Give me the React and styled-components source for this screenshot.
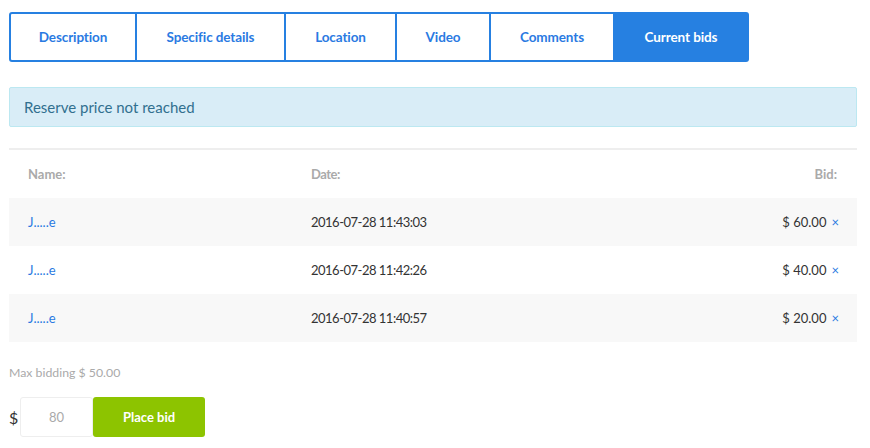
import styled, { createGlobalStyle } from "styled-components";

const GlobalStyle = createGlobalStyle`
  body {
    margin: 0;
    background: #fff;
    font-family: Lato, "Noto Sans", sans-serif;
  }
`;

const tabs = [
  { label: "Description", width: 128 },
  { label: "Specific details", width: 149 },
  { label: "Location", width: 111 },
  { label: "Video", width: 94 },
  { label: "Comments", width: 124 },
  { label: "Current bids", width: 134, active: true },
];

const bids = [
  { name: "J.....e", date: "2016-07-28 11:43:03", amount: "$ 60.00" },
  { name: "J.....e", date: "2016-07-28 11:42:26", amount: "$ 40.00" },
  { name: "J.....e", date: "2016-07-28 11:40:57", amount: "$ 20.00" },
];

export default function App() {
  return (
    <Page>
      <GlobalStyle />
      <TabBar>
        {tabs.map((t) => (
          <Tab key={t.label} $width={t.width} $active={t.active}>
            {t.label}
          </Tab>
        ))}
      </TabBar>

      <Alert>Reserve price not reached</Alert>

      <Table>
        <HeadRow>
          <NameCell>Name:</NameCell>
          <DateCell>Date:</DateCell>
          <BidCell>Bid:</BidCell>
        </HeadRow>
        {bids.map((b, i) => (
          <Row key={b.date} $striped={i % 2 === 0}>
            <NameCell>
              <NameLink href="#">{b.name}</NameLink>
            </NameCell>
            <DateCell>{b.date}</DateCell>
            <BidCell>
              {b.amount}
              <Remove>×</Remove>
            </BidCell>
          </Row>
        ))}
      </Table>

      <MaxBid>Max bidding $ 50.00</MaxBid>

      <BidForm>
        <Currency>$</Currency>
        <AmountInput defaultValue="" placeholder="80" />
        <PlaceButton>Place bid</PlaceButton>
      </BidForm>
    </Page>
  );
}

const Page = styled.div`
  padding: 12px 13px 0 9px;
  width: 848px;
`;

const TabBar = styled.div`
  display: flex;
`;

const Tab = styled.div`
  box-sizing: border-box;
  width: ${(p) => p.$width}px;
  height: 50px;
  display: flex;
  align-items: center;
  justify-content: center;
  border: 2px solid #2680e1;
  border-left-width: 0;
  &:first-child {
    border-left-width: 2px;
    border-radius: 3px 0 0 3px;
  }
  &:last-child {
    border-radius: 0 3px 3px 0;
  }
  background: ${(p) => (p.$active ? "#2680e1" : "#fff")};
  color: ${(p) => (p.$active ? "#fff" : "#2a7ae2")};
  font-size: 13.5px;
  font-weight: 700;
  letter-spacing: -0.1px;
`;

const Alert = styled.div`
  box-sizing: border-box;
  margin-top: 25px;
  height: 40px;
  padding: 0 14px;
  display: flex;
  align-items: center;
  background: #d9edf7;
  border: 1px solid #bce8f1;
  border-radius: 2px;
  color: #31708f;
  font-size: 15px;
`;

const Table = styled.div`
  margin-top: 21px;
  border-top: 2px solid #eeeeee;
`;

const HeadRow = styled.div`
  display: grid;
  grid-template-columns: 283px 1fr 200px;
  height: 48px;
  align-items: center;
  padding: 0 20px 0 19px;
  color: #aaaaaa;
  font-size: 13px;
  font-weight: 700;
`;

const Row = styled(HeadRow)`
  background: ${(p) => (p.$striped ? "#f8f8f8" : "#fff")};
  color: #333;
  font-weight: 400;
`;

const NameCell = styled.div``;

const DateCell = styled.div`
  letter-spacing: -0.5px;
`;

const BidCell = styled.div`
  text-align: right;
`;

const NameLink = styled.a`
  color: #2a7ae2;
  text-decoration: none;
`;

const Remove = styled.span`
  color: #2a7ae2;
  margin-left: 5px;
  margin-right: -2px;
  font-size: 13px;
`;

const MaxBid = styled.div`
  margin-top: 23px;
  color: #aaaaaa;
  font-size: 12.3px;
`;

const BidForm = styled.div`
  display: flex;
  align-items: center;
  margin-top: 17px;
`;

const Currency = styled.span`
  color: #333;
  font-size: 16px;
  width: 11px;
`;

const AmountInput = styled.input`
  box-sizing: border-box;
  width: 73px;
  height: 40px;
  border: 1px solid #eeeeee;
  border-radius: 3px;
  text-align: center;
  font-family: inherit;
  font-size: 13px;
  color: #333;
  outline: none;
  &::placeholder {
    color: #aaaaaa;
  }
`;

const PlaceButton = styled.button`
  width: 112px;
  height: 40px;
  border: none;
  border-radius: 3px;
  background: #8dc400;
  color: #fff;
  font-family: inherit;
  font-size: 13px;
  font-weight: 700;
  cursor: pointer;
`;
